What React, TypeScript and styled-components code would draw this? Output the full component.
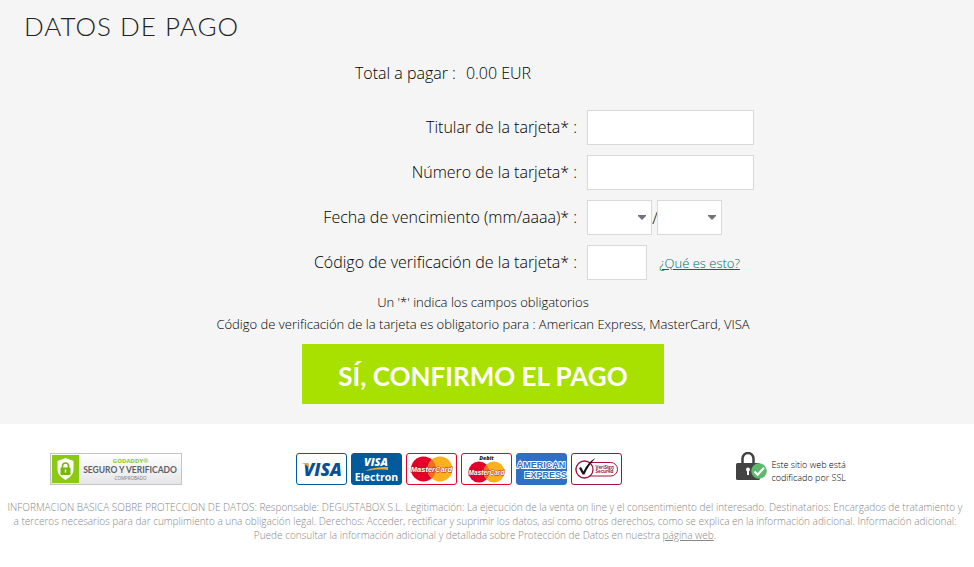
import React from "react";
import styled, { createGlobalStyle } from "styled-components";

const GlobalStyle = createGlobalStyle`
  * { box-sizing: border-box; }
  body {
    margin: 0;
    background: #fff;
    color: #000;
    font-family: "Open Sans", "Noto Sans", sans-serif;
    font-weight: 300;
    font-size: 16px;
  }
`;

const Payment = styled.main`
  background: #f5f5f5;
  padding: 7px 32px 20px 24px;
`;

const Title = styled.h1`
  margin: 0;
  font-family: Lato, "Open Sans", sans-serif;
  font-weight: 300;
  font-size: 26px;
  line-height: 38px;
  letter-spacing: 1px;
  color: #222;
`;

const Total = styled.p`
  display: flex;
  justify-content: center;
  gap: 10px;
  margin: 16px 80px 25px 0;
  line-height: 24px;
`;

const CardForm = styled.form`
  display: flex;
  flex-direction: column;
  align-items: center;
`;

const Fields = styled.div`
  display: grid;
  grid-template-columns: max-content 167px;
  gap: 10px;
  margin-left: 102px;
`;

const Label = styled.label`
  text-align: right;
  line-height: 35px;
`;

const FieldCell = styled.div`
  display: flex;
  align-items: center;
  white-space: nowrap;
`;

const Input = styled.input<{ $short?: boolean }>`
  width: ${(p) => (p.$short ? "60px" : "100%")};
  height: 35px;
  padding: 0 8px;
  border: 1px solid #d9d9d9;
  border-radius: 0;
  background: #fff;
  font: inherit;
`;

const SelectBox = styled.div`
  position: relative;
  width: 65px;
  height: 35px;
`;

const Select = styled.select`
  appearance: none;
  width: 100%;
  height: 100%;
  padding: 0 20px 0 8px;
  border: 1px solid #d9d9d9;
  border-radius: 0;
  background: #fff;
  font: inherit;
`;

const Arrow = styled.svg`
  position: absolute;
  right: 6px;
  top: 15px;
  pointer-events: none;
`;

const Slash = styled.span`
  width: 5px;
`;

const HelpLink = styled.a`
  margin-left: 12px;
  font-size: 13px;
  color: #006b68;
`;

const Notes = styled.p`
  margin: 11px 0 9px;
  font-size: 13px;
  line-height: 22px;
  text-align: center;
`;

const NoteLine = styled.span`
  display: block;
`;

const Confirm = styled.button`
  height: 60px;
  padding: 4px 36px 0;
  border: 0;
  background: #a8e000;
  color: #fff;
  font-family: Lato, "Open Sans", sans-serif;
  font-weight: 700;
  font-size: 26px;
  cursor: pointer;
`;

const TrustBar = styled.div`
  display: flex;
  flex-wrap: wrap;
  justify-content: space-between;
  align-items: center;
  padding: 28px 128px 0 50px;
`;

const Cards = styled.div`
  display: flex;
  gap: 4px;
`;

const Ssl = styled.div`
  display: flex;
  align-items: center;
  gap: 4px;
  font-size: 9px;
  font-weight: 300;
  line-height: 13px;
`;

const SslText = styled.span`
  padding-top: 3px;
`;

const Legal = styled.p`
  margin: 14px 11px 0 7px;
  color: #888;
  font-size: 10px;
  line-height: 14px;
  text-align: center;
`;

const LegalLink = styled.a`
  display: inline-block;
  color: inherit;
`;

const logoFont = "Open Sans, Noto Sans, sans-serif";

function DateSelect({ id, label, options }: { id: string; label: string; options: string[] }) {
  return (
    <SelectBox>
      <Select id={id} aria-label={label} defaultValue="">
        <option value=""></option>
        {options.map((o) => (
          <option key={o}>{o}</option>
        ))}
      </Select>
      <Arrow width="8" height="5" viewBox="0 0 8 5" aria-hidden="true">
        <path d="M0 0h8v1L4 5 0 1z" fill="#72727a" />
      </Arrow>
    </SelectBox>
  );
}

function GoDaddySeal() {
  return (
    <svg width="132" height="32" viewBox="0 0 132 32" role="img" aria-label="GoDaddy seguro y verificado">
      <defs>
        <linearGradient id="seal" x2="0" y2="1">
          <stop offset="0" stopColor="#fff" />
          <stop offset="1" stopColor="#e6e6e8" />
        </linearGradient>
      </defs>
      <rect x="0.500" y="0.500" width="131" height="31" fill="url(#seal)" stroke="#c4c4c4" />
      <rect x="2" y="2" width="27" height="28" fill="#8bc912" />
      <path d="M15.500 5l8 3v8c0 5-3 8-8 11-5-3-8-6-8-11V8z" fill="#fff" />
      <path d="M12.500 15v-2a3 3 0 0 1 6 0v2" fill="none" stroke="#76b70c" strokeWidth="1.600" />
      <rect x="10.500" y="14.500" width="10" height="7.500" rx="1" fill="#76b70c" />
      <path d="M15.500 16.500v3" stroke="#fff" strokeWidth="1.500" />
      <text x="80.500" y="9.500" textAnchor="middle" fontFamily={logoFont} fontSize="6" fontWeight="700" fill="#8bc912">GODADDY®</text>
      <text x="80" y="20" textAnchor="middle" fontFamily="Lato, sans-serif" fontSize="8.500" fontWeight="700" fill="#5a606b">SEGURO Y VERIFICADO</text>
      <text x="80.500" y="27" textAnchor="middle" fontFamily={logoFont} fontSize="4.500" fontWeight="400" fill="#777">COMPROBADO</text>
    </svg>
  );
}

function CardFrame({ name, stroke, fill = "#fff", children }: { name: string; stroke: string; fill?: string; children: React.ReactNode }) {
  return (
    <svg width="51" height="32" viewBox="0 0 51 32" role="img" aria-label={name}>
      <rect x="0.500" y="0.500" width="50" height="31" rx="2.500" fill={fill} stroke={stroke} />
      {children}
    </svg>
  );
}

function VisaLogo() {
  return (
    <CardFrame name="Visa" stroke="#005a9c">
      <text x="7.500" y="22.500" fontFamily={logoFont} fontSize="17.500" fontWeight="800" fontStyle="italic" fill="#0a4f96">VISA</text>
      <path d="M5 10h6c1 0 1.500.5 1.800 1.500L13 15c-2-3-5-4.500-8-5z" fill="#f0a92a" />
    </CardFrame>
  );
}

function VisaElectronLogo() {
  return (
    <CardFrame name="Visa Electron" stroke="#005a9c" fill="#005a9c">
      <text x="25" y="12.500" textAnchor="middle" fontFamily={logoFont} fontSize="11" fontWeight="800" fontStyle="italic" fill="#fff">VISA</text>
      <path d="M14 18c6-3 13-4 23-4v3c-9-1-16 0-23 1z" fill="#f0a92a" />
      <text x="25.500" y="28" textAnchor="middle" fontFamily={logoFont} fontSize="10.500" fontWeight="700" fill="#fff">Electron</text>
    </CardFrame>
  );
}

function MasterCardLogo() {
  return (
    <CardFrame name="MasterCard" stroke="#e4002b">
      <circle cx="17.500" cy="16" r="12.500" fill="#e4002b" />
      <circle cx="34" cy="16" r="12.500" fill="#fbb11f" />
      <path d="M25.800 6.600a12.500 12.500 0 0 1 0 18.800 12.500 12.500 0 0 1 0-18.800z" fill="#f06e1d" />
      <text x="25.500" y="18.800" textAnchor="middle" fontFamily="Liberation Sans, sans-serif" fontSize="7.500" fontWeight="700" fontStyle="italic" fill="#fff" stroke="#a02018" strokeWidth="0.800" paintOrder="stroke">MasterCard</text>
    </CardFrame>
  );
}

function MasterCardDebitLogo() {
  return (
    <CardFrame name="MasterCard Debit" stroke="#e4002b">
      <text x="25.500" y="7" textAnchor="middle" fontFamily={logoFont} fontSize="5.500" fontWeight="800" fontStyle="italic" fill="#222">Debit</text>
      <circle cx="18" cy="19" r="10.500" fill="#e4002b" />
      <circle cx="33" cy="19" r="10.500" fill="#fbb11f" />
      <path d="M25.500 11.700a10.500 10.500 0 0 1 0 14.600 10.500 10.500 0 0 1 0-14.600z" fill="#f06e1d" />
      <text x="25.500" y="21.500" textAnchor="middle" fontFamily="Liberation Sans, sans-serif" fontSize="6.500" fontWeight="700" fontStyle="italic" fill="#fff" stroke="#a02018" strokeWidth="0.800" paintOrder="stroke">MasterCard</text>
    </CardFrame>
  );
}

function AmexLogo() {
  return (
    <CardFrame name="American Express" stroke="#2f70c4" fill="#2f70c4">
      <g fontFamily="Liberation Sans, sans-serif" fontWeight="700" fontSize="9" fill="#2f70c4" stroke="#fff" strokeWidth="1.800" paintOrder="stroke">
        <text x="25" y="15" textAnchor="middle">AMERICAN</text>
        <text x="51" y="25" textAnchor="end">EXPRESS</text>
      </g>
    </CardFrame>
  );
}

function VerisignLogo() {
  return (
    <CardFrame name="VeriSign Secured" stroke="#a3123f">
      <rect x="5" y="9.500" width="41.500" height="13.500" rx="6.700" fill="#fff" stroke="#a3123f" />
      <circle cx="13.500" cy="16.500" r="8.500" fill="#fff" stroke="#a3123f" strokeWidth="1.300" />
      <path d="M8 15l2-1 2.500 4.500C15 12.500 19 8 24.500 5 20 10 16 15 13.500 21.500h-2z" fill="#161616" />
      <text x="24.500" y="15.800" fontFamily={logoFont} fontSize="4.500" fontWeight="700" fill="#a3123f">VeriSign</text>
      <text x="24.500" y="20" fontFamily={logoFont} fontSize="4.500" fontWeight="700" fill="#a3123f">Secured</text>
    </CardFrame>
  );
}

function PadlockIcon() {
  return (
    <svg width="31" height="34" viewBox="0 0 31 34" aria-hidden="true">
      <path d="M6.500 13V6.500a5.500 5.500 0 0 1 11 0V13" fill="none" stroke="#424242" strokeWidth="2.500" />
      <rect x="0" y="11" width="24" height="17" rx="1.500" fill="#424242" />
      <circle cx="12" cy="17.500" r="2" fill="#fff" />
      <path d="M11 18h2v5h-2z" fill="#fff" />
      <circle cx="23" cy="19" r="7.800" fill="#5fb96c" />
      <path d="M18.500 19.500l3.200 3.200 6.300-7" fill="none" stroke="#fff" strokeWidth="2.200" />
    </svg>
  );
}

const months = Array.from({ length: 12 }, (_, i) => String(i + 1).padStart(2, "0"));
const years = Array.from({ length: 12 }, (_, i) => String(2024 + i));

export default function App() {
  return (
    <>
      <GlobalStyle />
      <Payment>
        <Title>DATOS DE PAGO</Title>
        <Total>
          <span>Total a pagar :</span>
          <span>0.00 EUR</span>
        </Total>
        <CardForm onSubmit={(e) => e.preventDefault()}>
          <Fields>
            <Label htmlFor="holder">Titular de la tarjeta* :</Label>
            <FieldCell>
              <Input id="holder" type="text" />
            </FieldCell>
            <Label htmlFor="number">Número de la tarjeta* :</Label>
            <FieldCell>
              <Input id="number" type="text" inputMode="numeric" />
            </FieldCell>
            <Label htmlFor="month">Fecha de vencimiento (mm/aaaa)* :</Label>
            <FieldCell>
              <DateSelect id="month" label="Mes de vencimiento" options={months} />
              <Slash>/</Slash>
              <DateSelect id="year" label="Año de vencimiento" options={years} />
            </FieldCell>
            <Label htmlFor="cvv">Código de verificación de la tarjeta* :</Label>
            <FieldCell>
              <Input id="cvv" type="text" inputMode="numeric" $short />
              <HelpLink href="#cvv">¿Qué es esto?</HelpLink>
            </FieldCell>
          </Fields>
          <Notes>
            <NoteLine>Un '*' indica los campos obligatorios</NoteLine>
            <NoteLine>Código de verificación de la tarjeta es obligatorio para : American Express, MasterCard, VISA</NoteLine>
          </Notes>
          <Confirm type="submit">SÍ, CONFIRMO EL PAGO</Confirm>
        </CardForm>
      </Payment>
      <footer>
        <TrustBar>
          <GoDaddySeal />
          <Cards>
            <VisaLogo />
            <VisaElectronLogo />
            <MasterCardLogo />
            <MasterCardDebitLogo />
            <AmexLogo />
            <VerisignLogo />
          </Cards>
          <Ssl>
            <PadlockIcon />
            <SslText>
              Este sitio web está
              <br />
              codificado por SSL
            </SslText>
          </Ssl>
        </TrustBar>
        <Legal>
          INFORMACION BASICA SOBRE PROTECCION DE DATOS: Responsable: DEGUSTABOX S.L. Legitimación: La ejecución de la
          venta on line y el consentimiento del interesado. Destinatarios: Encargados de tratamiento y a terceros
          necesarios para dar cumplimiento a una obligación legal. Derechos: Acceder, rectificar y suprimir los datos,
          así como otros derechos, como se explica en la información adicional. Información adicional: Puede consultar
          la información adicional y detallada sobre Protección de Datos en nuestra{" "}
          <LegalLink href="#privacidad">página web</LegalLink>.
        </Legal>
      </footer>
    </>
  );
}
